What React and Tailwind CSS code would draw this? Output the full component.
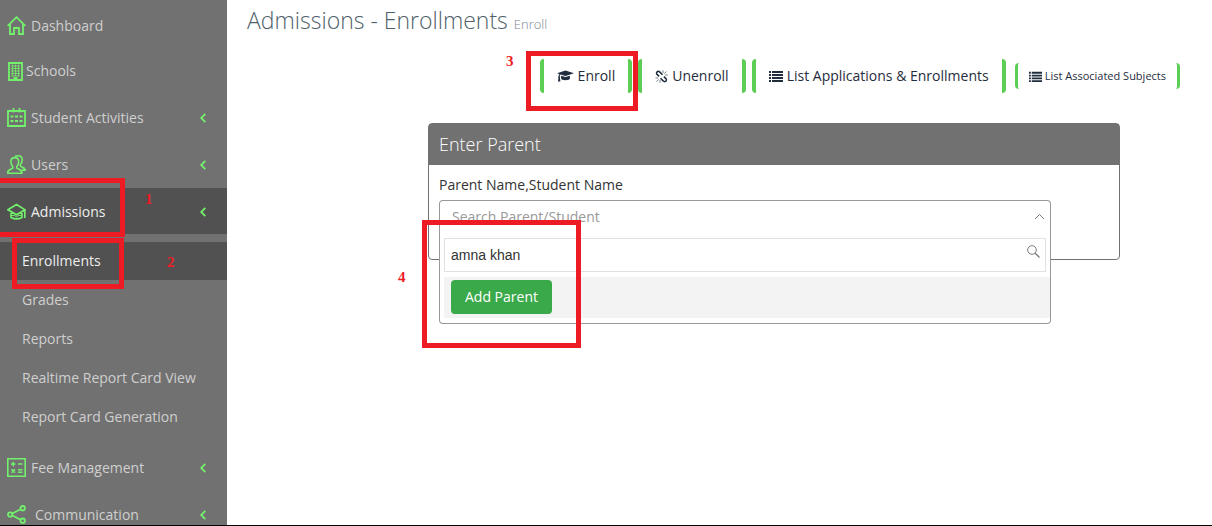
import React, { useState } from "react";

const iconProps = {
  width: 19,
  height: 19,
  viewBox: "0 0 19 19",
  fill: "none",
  stroke: "currentColor",
  strokeWidth: 1.8,
  "aria-hidden": true,
};

const HomeIcon = () => (
  <svg {...iconProps}>
    <path d="M.7 9.8 9.5 1.200l8.800 8.600M3 8v10h4v-6h5v6h4V8" />
  </svg>
);

const BuildingIcon = () => (
  <svg {...iconProps} width={15} viewBox="0 0 15 19">
    <path d="M1 1h13v17H1z" />
    <path d="M3 4h9M3 6.500h9M3 9h9M3 11.500h9M3 14h9M4.500 2.500V14M7.500 2.500V14M10.500 2.500V14" strokeWidth="0.8" />
    <path d="M5.500 16.500h4" strokeWidth="3" />
  </svg>
);

const CalendarIcon = () => (
  <svg {...iconProps}>
    <path d="M1 3h17v15H1zM6.500 0v4.500M12.500 0v4.500" />
    <path d="M3.500 8.500h3M8 8.500h3M12.500 8.500h3M3.500 13h3M8 13h3M12.500 13h3" strokeWidth="2.2" />
  </svg>
);

const UsersIcon = () => (
  <svg {...iconProps} strokeWidth={1.6}>
    <path d="M7.800 2.600c-2.500 0-3.900 1.700-3.900 4.200 0 2.200.8 3.700 1.900 4.700v1.600c-.6 1-4.900 1.200-5 4v1.100h14v-1.100c-.2-2.800-4.400-3-5-4v-1.600c1.100-1 1.900-2.500 1.900-4.700 0-2.500-1.400-4.200-3.900-4.200z" />
    <path d="M8 1.500C9 .9 10 .8 11.200.8c2.500 0 4 1.500 4 4 0 2.200-.8 3.700-1.800 4.700v1.600c.6 1 4.600 1.200 4.800 4h-3.500" />
  </svg>
);

const CapIcon = () => (
  <svg {...iconProps} strokeWidth={1.6}>
    <path d="M.9 7.800 9.500 2.500l8.600 5.300-8.600 5zM4 9.800v5.700c3.500 1.800 7.500 1.800 11 0V9.800M17.800 8v8" />
    <path d="M4.500 13.500h3l2 1.300 2-1.300h3" strokeWidth="1" />
  </svg>
);

const FeeIcon = () => (
  <svg {...iconProps} strokeWidth={1.6}>
    <path d="M.8.8h17.400v17.400H.8z" />
    <path d="M4 6h4.500M6.200 3.800v4.500M11 6h4.500M11 11.800h4.500M11 14.300h4.500M4.500 11.200l3.500 3.600M8 11.200l-3.500 3.600" />
  </svg>
);

const ShareIcon = () => (
  <svg {...iconProps}>
    <circle cx="3.200" cy="9.500" r="2.200" />
    <circle cx="15.700" cy="3.200" r="2.200" />
    <circle cx="15.700" cy="15.700" r="2.200" />
    <path d="m5.300 8.500 8.300-4.200M5.300 10.500l8.300 4.200" />
  </svg>
);

const GraduationIcon = () => (
  <svg width="17" height="12" viewBox="0 0 17 12" fill="currentColor" aria-hidden="true">
    <path d="M8.500.5 17 3.200 8.500 6 3.600 4.400c-.6.400-.9 1-.9 1.800.6.300.7 1 .2 1.400l.5 3.900H1l.5-3.900c-.5-.4-.4-1.100.1-1.400 0-.9.300-1.600.8-2.100L0 3.200z" />
    <path d="m4.200 5.700 4.300 1.400 4.300-1.400.2 2.500c0 1.100-2 2-4.500 2s-4.500-.9-4.500-2z" />
  </svg>
);

const UnlinkIcon = () => (
  <svg width="13" height="13" viewBox="0 0 13 13" fill="none" stroke="currentColor" strokeWidth="1.500" aria-hidden="true">
    <path d="M7.500 4.800 4.600 1.900a1.700 1.700 0 0 0-2.500 0 1.700 1.700 0 0 0 0 2.500l2 2M5.500 8.200l2.900 2.900a1.700 1.700 0 0 0 2.500 0 1.700 1.700 0 0 0 0-2.500l-2-2" />
    <path d="M.5 8h2.700M1.500 11.500l2.200-2.200M5 10v2.700M8 .3V3M11.500 1.500 9.300 3.700M10 5h2.700" strokeWidth="0.600" />
  </svg>
);

const ListIcon = ({ size }) => (
  <svg width={size} height={size} viewBox="0 0 14 14" fill="currentColor" aria-hidden="true">
    <path d="M0 2h2v2H0zM3 2h11v2H3zM0 5h2v2H0zM3 5h11v2H3zM0 8h2v2H0zM3 8h11v2H3zM0 11h2v2H0zM3 11h11v2H3z" />
  </svg>
);

const Chevron = () => (
  <svg width="6" height="10" viewBox="0 0 6 10" fill="none" stroke="currentColor" strokeWidth="1.800" aria-hidden="true">
    <path d="M5.300.8 1.200 5l4.100 4.200" />
  </svg>
);

const menuTop = [
  { label: "Student Activities", icon: CalendarIcon },
  { label: "Users", icon: UsersIcon },
  { label: "Admissions", icon: CapIcon, active: true },
];

const subMenu = ["Enrollments", "Grades", "Reports", "Realtime Report Card View", "Report Card Generation"];

const menuBottom = [
  { label: "Fee Management", icon: FeeIcon },
  { label: "Communication", icon: ShareIcon, wide: true },
];

function MenuGroup({ item }) {
  const Icon = item.icon;
  return (
    <a
      href="#"
      className={`flex h-[46px] items-center pt-px pr-[21px] pl-[7px] ${item.active ? "bg-[#515151] text-[#eeeeee]" : ""}`}
    >
      <span className="text-[#73f16c]">
        <Icon />
      </span>
      <span className={`flex-1 ${item.wide ? "pl-[9px]" : "pl-[5px]"}`}>{item.label}</span>
      <span className="text-[#73f16c]">
        <Chevron />
      </span>
    </a>
  );
}

function Sidebar() {
  return (
    <nav className="w-[227px] shrink-0 bg-[#717171] pt-[3px] text-sm text-[#cfcfcf]">
      <a href="#" className="flex h-[45px] items-center gap-[5px] pl-[7px]">
        <span className="text-[#73f16c]">
          <HomeIcon />
        </span>
        Dashboard
      </a>
      <a href="#" className="flex h-[46px] items-center gap-[3px] pl-2">
        <span className="text-[#73f16c]">
          <BuildingIcon />
        </span>
        Schools
      </a>
      <div className="flex flex-col gap-px">
        {menuTop.map((item) => (
          <MenuGroup key={item.label} item={item} />
        ))}
      </div>
      <ul className="flex flex-col gap-px py-2">
        {subMenu.map((label, i) => (
          <li key={label}>
            <a
              href="#"
              className={`flex h-[38px] items-center pl-[22px] ${i === 0 ? "bg-[#515151] text-[#eeeeee]" : ""}`}
            >
              {label}
            </a>
          </li>
        ))}
      </ul>
      <div className="flex flex-col gap-px">
        {menuBottom.map((item) => (
          <MenuGroup key={item.label} item={item} />
        ))}
      </div>
    </nav>
  );
}

function Toolbar() {
  const large = "flex h-[34px] items-center gap-1 rounded border-x-4 border-[#5dce55] px-[13px] text-sm";
  return (
    <div className="flex items-center justify-end gap-[6px] pr-3 text-[#1f2d3d]">
      <button className={large}>
        <GraduationIcon />
        Enroll
      </button>
      <button className={large}>
        <UnlinkIcon />
        Unenroll
      </button>
      <button className={large}>
        <ListIcon size={14} />
        List Applications &amp; Enrollments
      </button>
      <button className="ml-[3px] flex h-[26px] items-center gap-[3px] rounded border-x-3 border-[#5dce55] px-[11px] text-[11px]">
        <ListIcon size={13} />
        List Associated Subjects
      </button>
    </div>
  );
}

function ParentSelect() {
  const [search, setSearch] = useState("amna khan");

  return (
    <div className="relative max-w-[612px]">
      <button
        id="parent"
        className="flex h-[38px] w-full items-start justify-between rounded-t border border-b-0 border-[#999999] px-3 pt-[6px] text-left text-sm text-[#999999]"
      >
        Search Parent/Student
        <svg className="mt-[6px] -mr-[7px]" width="11" height="7" viewBox="0 0 11 7" fill="none" stroke="#777777" aria-hidden="true">
          <path d="M1 6 5.500 1.500 10 6" />
        </svg>
      </button>
      <div className="absolute top-full right-0 left-0 rounded-b border border-t-0 border-[#999999] bg-white pb-[5px]">
        <div className="relative mx-1">
          <input
            aria-label="Search"
            value={search}
            onChange={(e) => setSearch(e.target.value)}
            className="block h-[34px] w-full border border-[#e1e1e1] px-[6px] font-['Liberation_Sans',sans-serif] text-sm text-[#333333] outline-none"
          />
          <svg className="absolute top-[7px] right-[6px]" width="13" height="13" viewBox="0 0 13 13" fill="none" stroke="#777777" aria-hidden="true">
            <circle cx="5" cy="5" r="4.300" />
            <path d="m8.200 8.200 4.300 4.300" strokeWidth="1.300" />
          </svg>
        </div>
        <div className="mt-[5px] ml-1 flex h-[41px] items-start bg-[#f3f3f3] pt-[3px] pl-[7px]">
          <button className="h-[34px] rounded bg-[#39a949] px-[14px] text-sm text-white">Add Parent</button>
        </div>
      </div>
    </div>
  );
}

function Annotations() {
  const box = "absolute border-5 border-[#ed1c24]";
  const num = "absolute font-['Liberation_Serif',serif] text-[15px] leading-4 font-bold text-[#ed1c24]";
  return (
    <div className="pointer-events-none absolute inset-0">
      <div className={`${box} top-[178px] -left-[5px] h-[59px] w-[130px]`} />
      <div className={`${box} top-[238px] left-3 h-[51px] w-28`} />
      <div className={`${box} top-[51px] left-[526px] h-[60px] w-28`} />
      <div className={`${box} top-[220px] left-[422px] h-32 w-[159px]`} />
      <span className={`${num} top-[191px] left-[145px]`}>1</span>
      <span className={`${num} top-[254px] left-[167px]`}>2</span>
      <span className={`${num} top-[53px] left-[506px]`}>3</span>
      <span className={`${num} top-[269px] left-[398px]`}>4</span>
    </div>
  );
}

function App() {
  return (
    <div className="relative flex h-screen overflow-hidden border-b border-black bg-white font-['Open_Sans',sans-serif]">
      <Sidebar />
      <main className="min-w-0 flex-1 px-5">
        <h1 className="flex h-10 items-baseline gap-[6px] pt-1 text-[23px] leading-8 font-light text-[#4f5f6a]">
          Admissions - Enrollments
          <small className="text-[13px] text-[#7b8791]">Enroll</small>
        </h1>
        <div className="pt-[19px]">
          <Toolbar />
        </div>
        <section className="mt-[30px] mr-[72px] ml-auto max-w-[692px] rounded border border-[#717171]">
          <h2 className="flex h-[41px] items-center bg-[#717171] px-[10px] pb-0.5 text-lg font-light text-white">
            Enter Parent
          </h2>
          <div className="px-[10px] pt-[10px] pb-[21px] text-sm text-[#333333]">
            <label htmlFor="parent" className="mb-[5px] block">
              Parent Name,Student Name
            </label>
            <ParentSelect />
          </div>
        </section>
      </main>
      <Annotations />
    </div>
  );
}

export default App;
